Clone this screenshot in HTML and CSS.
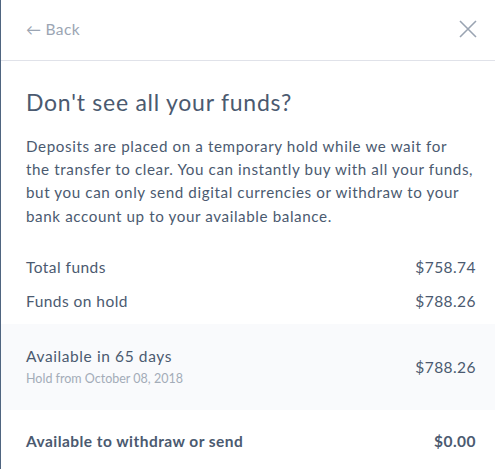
FILE: index.html
```html
<!DOCTYPE html>
<html>
<head>
<meta charset="utf-8">
<link rel="stylesheet" href="styles.css">
</head>
<body>
<div class="modal">
  <div class="header">
    <a class="back"><span class="arrow">&larr;</span> Back</a>
    <svg class="close" width="18" height="18" viewBox="0 0 18 18"><path d="M1 1 L17 17 M17 1 L1 17" stroke="#9aa4b2" stroke-width="1.6" fill="none"/></svg>
  </div>
  <div class="body">
    <h1 class="title">Don't see all your funds?</h1>
    <p class="desc">Deposits are placed on a temporary hold while we wait for<br>the transfer to clear. You can instantly buy with all your funds,<br>but you can only send digital currencies or withdraw to your<br>bank account up to your available balance.</p>
  </div>
  <div class="rows">
    <div class="row"><span>Total funds</span><span>$758.74</span></div>
    <div class="row"><span>Funds on hold</span><span>$788.26</span></div>
  </div>
  <div class="hold">
    <div class="hold-info">
      <div class="hold-title">Available in 65 days</div>
      <div class="hold-sub">Hold from October 08, 2018</div>
    </div>
    <div class="hold-amount">$788.26</div>
  </div>
  <div class="row total"><span>Available to withdraw or send</span><span>$0.00</span></div>
</div>
</body>
</html>
```
FILE: styles.css
```css
html, body {
  margin: 0;
  padding: 0;
  background: #fff;
}
body {
  font-family: Lato, "Noto Sans", sans-serif;
  color: #4b5a70;
  letter-spacing: 0.45px;
}
.modal {
  border-left: 1px solid #4f6580;
  height: 469px;
  box-sizing: border-box;
  overflow: hidden;
}
.header {
  height: 61px;
  box-sizing: border-box;
  border-bottom: 1px solid #e0e2e9;
  display: flex;
  align-items: center;
  justify-content: space-between;
  padding: 0 18px 0 25px;
}
.back {
  font-size: 15.5px;
  color: #9ba5b3;
  display: flex;
  align-items: center;
  gap: 4px;
  margin-top: -2px;
}
.arrow {
  font-size: 15px;
}
.close {
  display: block;
  margin-top: -2px;
}
.body {
  padding: 0 8px 0 25px;
}
.title {
  margin: 26px 0 0;
  font-size: 23px;
  font-weight: 400;
  line-height: 30px;
  letter-spacing: 0.75px;
}
.desc {
  margin: 18px 0 0;
  font-size: 15.2px;
  line-height: 23.2px;
  letter-spacing: 0.6px;
  white-space: nowrap;
}
.rows {
  padding-top: 22px;
  padding-bottom: 6px;
}
.row {
  display: flex;
  justify-content: space-between;
  padding: 0 19px 0 25px;
  font-size: 15.5px;
  line-height: 34px;
}
.hold {
  background: #f9fafc;
  height: 86px;
  box-sizing: border-box;
  display: flex;
  align-items: center;
  justify-content: space-between;
  padding: 0 19px 0 25px;
}
.hold-title {
  font-size: 15.5px;
  line-height: 22px;
  letter-spacing: 0.6px;
}
.hold-sub {
  font-size: 12.5px;
  color: #a3acb8;
  line-height: 20px;
  margin-top: 2px;
  letter-spacing: 0;
}
.hold-amount {
  font-size: 15.5px;
}
.total {
  font-weight: 700;
  margin-top: 14px;
}
```
